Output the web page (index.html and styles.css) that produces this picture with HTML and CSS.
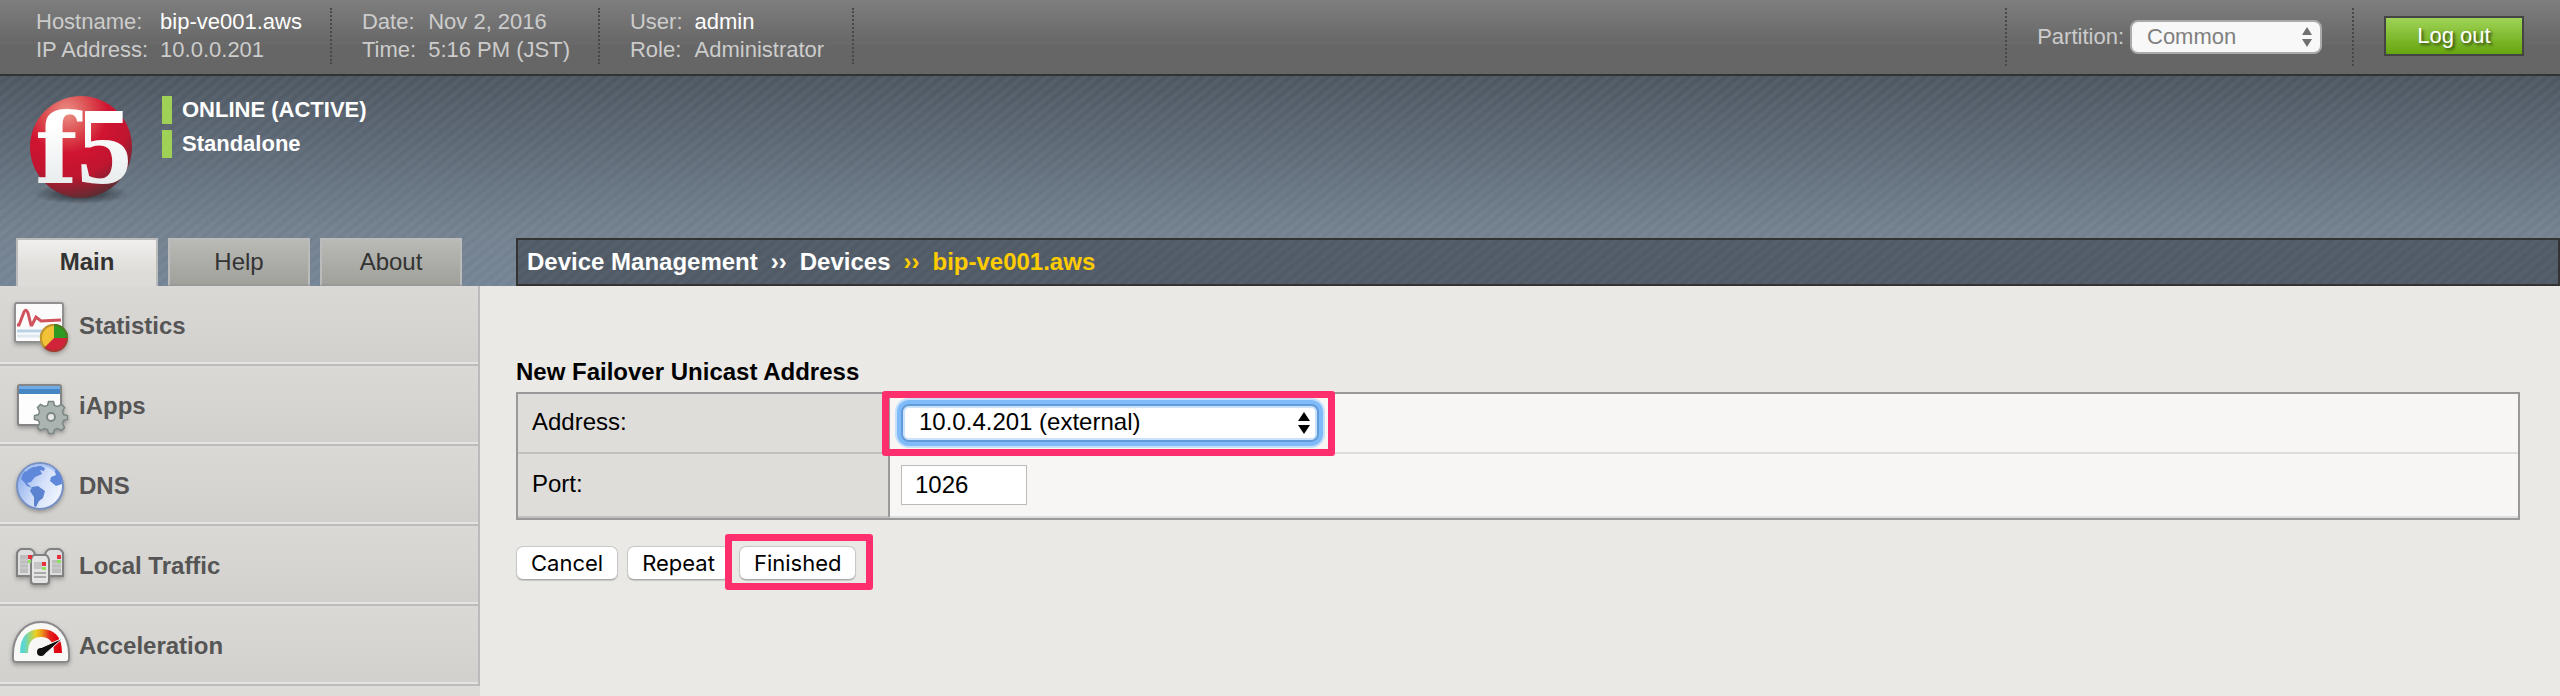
FILE: index.html
```html
<!DOCTYPE html>
<html lang="en">
<head>
<meta charset="utf-8">
<title>BIG-IP - Device Management</title>
<link rel="stylesheet" href="styles.css">
</head>
<body>
<header class="topbar">
  <dl class="info info-host">
    <dt>Hostname:</dt><dd class="strong">bip-ve001.aws</dd>
    <dt>IP Address:</dt><dd>10.0.0.201</dd>
  </dl>
  <dl class="info">
    <dt>Date:</dt><dd>Nov 2, 2016</dd>
    <dt>Time:</dt><dd>5:16 PM (JST)</dd>
  </dl>
  <dl class="info">
    <dt>User:</dt><dd class="strong">admin</dd>
    <dt>Role:</dt><dd>Administrator</dd>
  </dl>
  <div class="partition">
    <label for="partition">Partition:</label>
    <span class="select-wrap">
      <select id="partition" class="select select-partition"><option>Common</option></select>
      <svg class="arrows" viewBox="0 0 12 22" aria-hidden="true"><path d="M6 1l5 8H1zM6 21l5-8H1z"/></svg>
    </span>
  </div>
  <div class="logout-cell"><button type="button" class="logout">Log out</button></div>
</header>

<div class="banner">
  <div class="brand">
    <svg class="logo" viewBox="0 0 112 112" role="img" aria-label="f5">
      <defs>
        <radialGradient id="ball" cx="0.36" cy="0.16" r="0.9">
          <stop offset="0" stop-color="#eb9288"/><stop offset="0.25" stop-color="#dc4c50"/>
          <stop offset="0.45" stop-color="#d01431"/><stop offset="0.7" stop-color="#c01530"/><stop offset="1" stop-color="#4e3032"/>
        </radialGradient>
        <radialGradient id="shade"><stop offset="0" stop-color="#1c2126" stop-opacity="0.9"/><stop offset="1" stop-color="#1c2126" stop-opacity="0"/></radialGradient>
        <linearGradient id="letter" x1="0" y1="0" x2="0" y2="1"><stop offset="0.3" stop-color="#fff"/><stop offset="1" stop-color="#dfe5e6"/></linearGradient>
      </defs>
      <ellipse cx="56" cy="98" rx="48" ry="10" fill="url(#shade)"/>
      <circle cx="56" cy="51" r="51" fill="url(#ball)"/>
      <text class="logo-f" x="10" y="87" fill="url(#letter)">f</text>
      <text class="logo-5" x="52" y="87" fill="url(#letter)">5</text>
    </svg>
    <ul class="status">
      <li>ONLINE (ACTIVE)</li>
      <li>Standalone</li>
    </ul>
  </div>
  <div class="navrow">
    <nav class="tabs">
      <a class="tab tab-active" href="#main">Main</a>
      <a class="tab" href="#help">Help</a>
      <a class="tab" href="#about">About</a>
    </nav>
    <nav class="crumbs" aria-label="Breadcrumb">
      <a href="#dm">Device Management</a><span>››</span><a href="#devices">Devices</a><span class="current">››</span><a class="current" href="#device">bip-ve001.aws</a>
    </nav>
  </div>
</div>

<div class="columns">
  <nav class="sidebar">
    <a class="item" href="#statistics">
      <svg class="icon" viewBox="0 0 60 60" aria-hidden="true">
        <rect x="5" y="7" width="48" height="39" rx="2" fill="#fbfbfb" stroke="#909090" stroke-width="2"/>
        <path d="M7 35h36" stroke="#b9d2e6" stroke-width="3"/><path d="M7 40h36" stroke="#dde8f0" stroke-width="3"/>
        <path d="M7 29h2l5-13q2-4 4 1l3 12h1l4-8 5 4 20-1" fill="none" stroke="#d0525c" stroke-width="3"/>
        <circle cx="44" cy="42" r="14" fill="#d1233a"/>
        <path d="M44 42V28a14 14 0 0 1 14 14z" fill="#2f9a22"/>
        <path d="M44 42V28a14 14 0 0 0-10 24z" fill="#f2c236"/>
        <circle cx="44" cy="42" r="13" fill="none" stroke="#6a5a20" stroke-opacity="0.4" stroke-width="2"/>
      </svg>Statistics</a>
    <a class="item" href="#iapps">
      <svg class="icon" viewBox="0 0 60 60" aria-hidden="true">
        <rect x="8" y="9" width="43" height="40" rx="2" fill="#fdfdfd" stroke="#858585" stroke-width="2"/>
        <path d="M9 10h41v8H9z" fill="#4686c4"/><path d="M9 10h41v3H9z" fill="#6cabe4"/>
        <path d="M38.500 25.500h5l1 4 3 1 4-2 3 3-2 4 1 3 4 1v4l-4 1-1 3 2 4-3 3-4-2-3 1-1 4h-5l-1-4-3-1-4 2-3-3 2-4-1-3-4-1v-4l4-1 1-3-2-4 3-3 4 2 3-1z" fill="#aab5b2" stroke="#7c8784" stroke-width="1.500"/>
        <circle cx="41" cy="41" r="4" fill="#e9eae8" stroke="#7c8784" stroke-width="2"/>
      </svg>iApps</a>
    <a class="item" href="#dns">
      <svg class="icon" viewBox="0 0 60 60" aria-hidden="true">
        <defs><linearGradient id="sea" x1="0" y1="0.3" x2="1" y2="0.8"><stop offset="0" stop-color="#8fb0ee"/><stop offset="0.5" stop-color="#d3e0fa"/><stop offset="1" stop-color="#f5f8fe"/></linearGradient></defs>
        <circle cx="30" cy="30" r="23" fill="url(#sea)" stroke="#7891c4" stroke-width="2"/>
        <path d="M11 23q2-9 11-13l4 1 3-2 6 3-1 3-4-1 2 4-7 3-4 5-4 1 5 5-5-2-3-4z" fill="#5f88da"/>
        <path d="M44 13l3 1q5 6 5 14l-6 2-6-5 1-4 5-2-1-3z" fill="#5f88da"/>
        <path d="M22 31l6-1 7 5-2 7-4 3-3 6-2-1v-9l-4-6z" fill="#5c83cf"/>
        <path d="M15 15q6-6 15-6 9 0 15 6" stroke="#a9c2f4" stroke-width="2" fill="none"/>
      </svg>DNS</a>
    <a class="item" href="#ltm">
      <svg class="icon" viewBox="0 0 60 60" aria-hidden="true">
        <g fill="#dedede" stroke="#808080" stroke-width="2">
          <path d="M7 40V17q2-4 5-4h7q4 0 6 5v22z"/><path d="M53 40V17q-2-4-5-4h-7q-4 0-6 5v22z"/>
        </g>
        <path d="M10 19h8v18h-8zM42 24h9v13h-9z" fill="#bdbdbd"/>
        <path d="M10 24h8M10 28h8M10 32h8M42 28h9M42 32h9" stroke="#d2d2d2"/>
        <path d="M21 24q1-5 4-5h10q3 0 4 5v21q0 3-3 3H24q-3 0-3-3z" fill="#e4e4e4" stroke="#808080" stroke-width="2"/>
        <path d="M24 26h8v7h-8z" fill="#c6c6c6"/><path d="M24 37h12M24 41h12" stroke="#aaa" stroke-width="2"/>
        <path d="M18 19h4v4h-4zM47 19h4v4h-4zM32 26h4v4h-4z" fill="#e6303e"/><path d="M18 24h3v3h-3zM47 24h4v3h-4zM32 31h4v3h-4z" fill="#8ee060"/>
      </svg>Local Traffic</a>
    <a class="item" href="#acceleration">
      <svg class="icon" viewBox="0 0 60 60" aria-hidden="true">
        <defs><linearGradient id="dial"><stop offset="0" stop-color="#5cd6d2"/><stop offset="0.2" stop-color="#a8d46a"/><stop offset="0.35" stop-color="#ecd020"/><stop offset="0.5" stop-color="#eda01e"/><stop offset="0.75" stop-color="#e2261c"/><stop offset="1" stop-color="#e00010"/></linearGradient></defs>
        <path d="M3 38C3 20 14 6 31 6s28 14 28 32v5q0 3-4 3H7q-4 0-4-3z" fill="#f8f8f7" stroke="#8a8a8a" stroke-width="2"/>
        <path d="M14 37q0-20 17-20t17 20" fill="none" stroke="url(#dial)" stroke-width="8"/>
        <path d="M28 33L53 22 33 40z" fill="#111" stroke="#fff"/>
        <circle cx="31" cy="36" r="4" fill="#111"/>
      </svg>Acceleration</a>
  </nav>

  <main class="content">
    <h1 class="title">New Failover Unicast Address</h1>
    <form>
      <table class="form-table">
        <tr>
          <th scope="row"><label for="address">Address:</label></th>
          <td><span class="select-wrap marked marked-address">
            <select id="address" class="select select-address"><option>10.0.4.201 (external)</option></select>
            <svg class="arrows" viewBox="0 0 12 22" aria-hidden="true"><path d="M6 0l6 9H0zM6 22l6-9H0z"/></svg>
          </span></td>
        </tr>
        <tr class="row-port">
          <th scope="row"><label for="port">Port:</label></th>
          <td><input id="port" class="port" type="text" value="1026"></td>
        </tr>
      </table>
      <div class="actions">
        <button type="button" class="btn">Cancel</button>
        <button type="button" class="btn">Repeat</button>
        <span class="marked marked-finish"><button type="button" class="btn">Finished</button></span>
      </div>
    </form>
  </main>
</div>
</body>
</html>
```
FILE: styles.css
```css
* { box-sizing: border-box; }
body {
  margin: 0;
  min-height: 100vh;
  display: flex;
  flex-direction: column;
  background: #eae9e5;
  color: #000;
  font: 24px/28px "Liberation Sans", Arial, sans-serif;
}
a { color: inherit; text-decoration: none; }
select, input, button { font: inherit; color: inherit; margin: 0; }

.topbar {
  display: flex;
  height: 76px;
  padding: 8px 36px 8px 0;
  border-bottom: 2px solid #333;
  background: linear-gradient(#7e7e7e, #686868 42px, #6b6b6b 43px, #666 45px);
  color: #ccc;
  font-size: 22px;
}
.info {
  display: grid;
  grid-template-columns: auto auto;
  column-gap: 12px;
  align-content: start;
  height: 56px;
  margin: 0;
  padding: 0 28px 0 30px;
  border-right: 2px dotted #484848;
}
.info-host { padding-left: 36px; }
.info dd { margin: 0; }
.info .strong { color: #fff; }
.partition {
  display: flex;
  align-items: center;
  gap: 6px;
  height: 58px;
  margin-left: auto;
  padding: 0 30px;
  border: 2px dotted #484848;
  border-width: 0 2px;
}
.logout-cell { padding: 8px 0 0 30px; }
.logout {
  width: 140px;
  height: 40px;
  padding: 0;
  border: 2px solid #444;
  background: linear-gradient(#9fd356, #66a50f);
  color: #fff;
  text-shadow: 2px 2px 3px rgba(0, 0, 0, 0.6);
}

.select-wrap { position: relative; display: inline-block; vertical-align: top; }
.select { appearance: none; display: block; outline: 0; background: #fff; }
.select-partition {
  width: 192px;
  height: 34px;
  padding: 0 15px;
  border: 2px solid #aaa;
  border-radius: 8px;
  background: #f8f8f8;
  color: #808080;
}
.select-address {
  width: 418px;
  height: 38px;
  padding: 0 16px 2px;
  border: 2px solid #629bd8;
  border-radius: 8px;
  box-shadow: inset 0 0 0 2px #c9e3fd, 0 0 0 4px #80bbf9, 0 0 0 6px #c6e0fa;
}
.arrows {
  position: absolute;
  top: 50%;
  right: 9px;
  width: 12px;
  height: 22px;
  margin-top: -11px;
  fill: currentColor;
  pointer-events: none;
}
.partition .arrows { color: #707070; }

.banner {
  background:
    repeating-linear-gradient(140deg, rgba(255, 255, 255, 0.035) 0 4px, transparent 4px 8px),
    linear-gradient(#4d5762, #73818f 75%, #748494);
}
.brand { display: flex; height: 162px; padding: 20px 25px; gap: 25px; }
.logo { flex: none; width: 112px; height: 112px; overflow: visible; }
.logo-f { font: bold 98px "DejaVu Serif", serif; }
.logo-5 { font: bold 110px "Liberation Serif", serif; }
.status {
  display: grid;
  gap: 6px;
  align-content: start;
  margin: 0;
  padding: 0;
  list-style: none;
  color: #fff;
  font-size: 22px;
  font-weight: bold;
}
.status li { padding-left: 10px; border-left: 10px solid #9fd156; }
.navrow { display: flex; height: 48px; }
.tabs { display: flex; flex: none; gap: 10px; width: 516px; padding-left: 16px; }
.tab {
  width: 142px;
  border: 2px solid #bbb;
  border-bottom-color: #999;
  background: linear-gradient(#b9b9b5, #a1a19c);
  color: #333;
  line-height: 44px;
  text-align: center;
}
.tab-active {
  border-bottom: 0;
  background: linear-gradient(#f0efed, #dddcd8 70%);
  font-weight: bold;
}
.crumbs {
  display: flex;
  flex: 1;
  gap: 13px;
  padding-left: 9px;
  border: 2px solid #333;
  background: repeating-linear-gradient(140deg, #545f6b 0 4px, #505b66 4px 8px);
  color: #fff;
  font-weight: bold;
  line-height: 44px;
}
.current { color: #fc0; }

.columns { display: flex; flex: 1; }
.sidebar { flex: none; width: 480px; background: #dddcd8; }
.item {
  display: flex;
  align-items: center;
  gap: 9px;
  height: 80px;
  padding: 2px 0 0 10px;
  border: 2px solid #bbb;
  border-width: 0 2px 2px 0;
  background: linear-gradient(#dad9d5, #d1d0cc);
  box-shadow: inset 0 -2px #e4e3df;
  color: #555;
  font-weight: bold;
}
.icon { width: 60px; height: 60px; filter: drop-shadow(0 2px 2px rgba(0, 0, 0, 0.3)); }

.content { flex: 1; padding: 72px 40px 0 36px; }
.title { margin: 0 0 6px; font-size: 24px; line-height: 28px; }
.form-table {
  width: 100%;
  border: 2px solid #999;
  border-spacing: 0;
  background: #f7f6f4;
}
.form-table th, .form-table td {
  padding: 10px 11px;
  border-bottom: 2px solid #ddd;
  text-align: left;
  vertical-align: top;
}
.form-table th {
  width: 372px;
  padding: 14px;
  border-right: 2px solid #999;
  border-bottom-color: #c1c0bc;
  background: #dedddA;
  font-weight: normal;
}
.form-table .row-port td { padding: 11px; }
.form-table .row-port th { padding-top: 16px; }
.port {
  display: block;
  width: 126px;
  height: 40px;
  padding: 0 13px;
  border: 1px solid #bbb;
  background: #fff;
}
.actions { display: flex; gap: 9px; padding-top: 26px; }
.btn {
  height: 34px;
  padding: 0 14px;
  border: 1px solid #c8c8c8;
  border-bottom-color: #aaa;
  border-radius: 7px;
  background: #fff;
  box-shadow: 0 1px 1px rgba(0, 0, 0, 0.15);
  font: 22px/32px Inter, sans-serif;
}
.marked { position: relative; }
.marked::after {
  content: "";
  position: absolute;
  border: 7px solid #ff2f6d;
  border-radius: 3px;
  pointer-events: none;
}
.marked-address::after { inset: -13px -16px -14px -19px; }
.marked-finish::after { inset: -12px -17px -10px -14px; }
```
